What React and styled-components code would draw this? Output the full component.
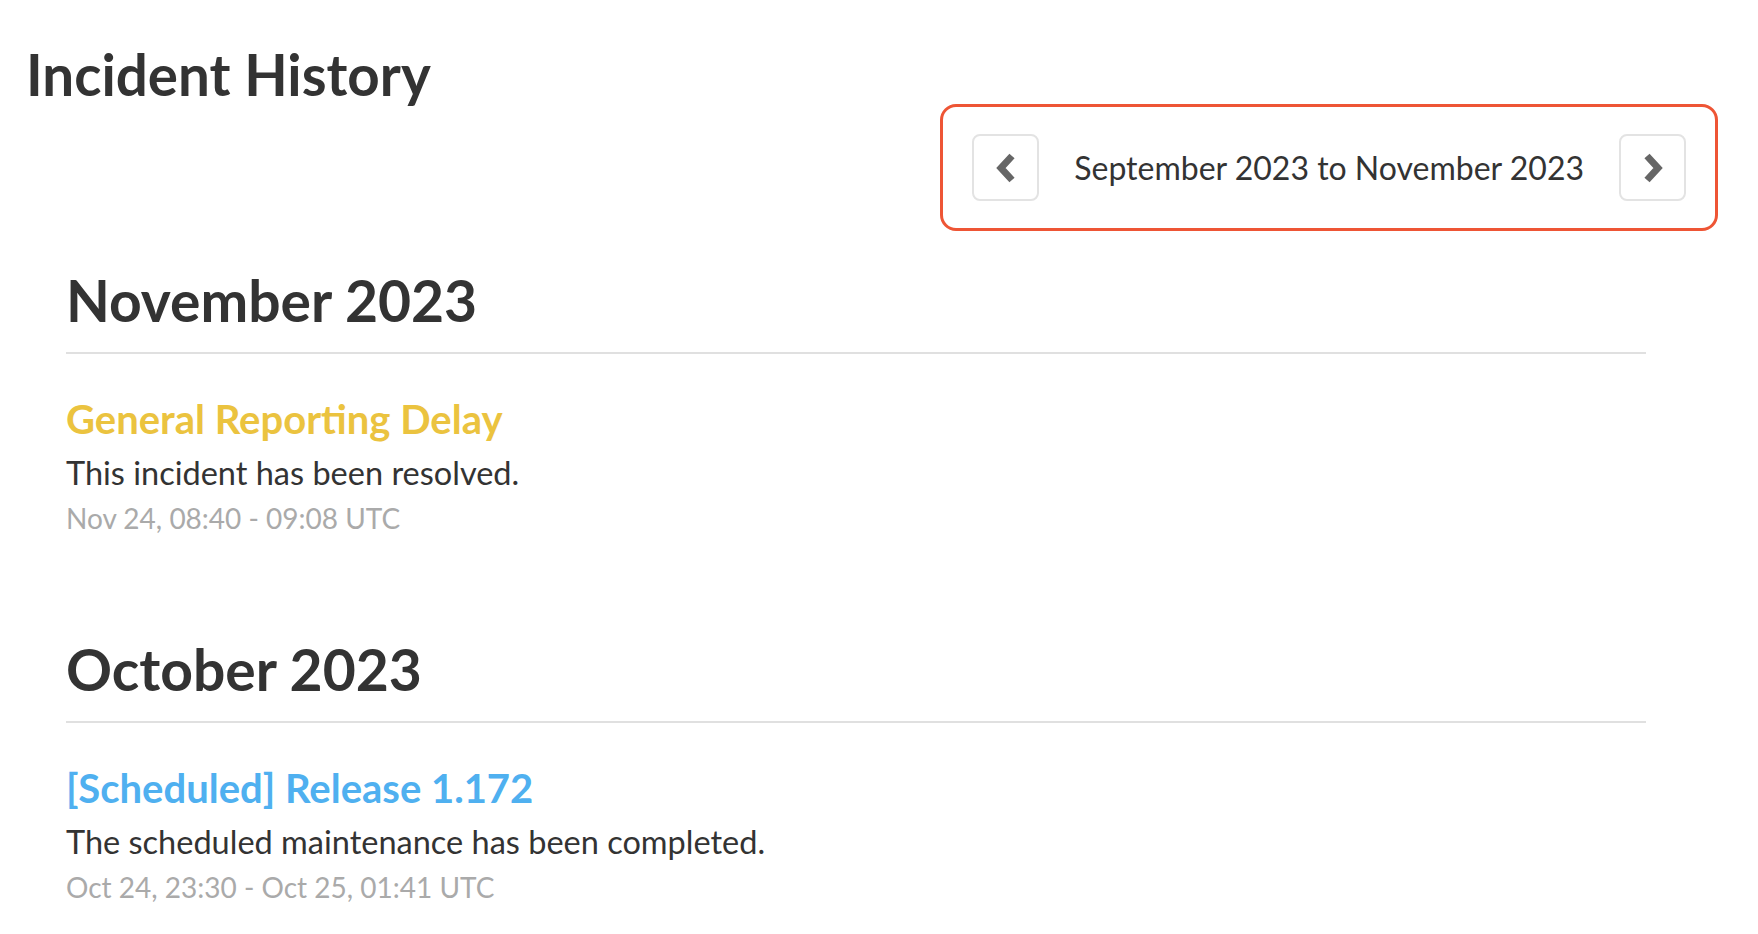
import React from 'react';
import styled, { createGlobalStyle } from 'styled-components';

const GlobalStyle = createGlobalStyle`
  html, body {
    margin: 0;
    padding: 0;
    background: #ffffff;
  }
  body {
    font-family: "Lato", "Liberation Sans", sans-serif;
    color: #333333;
  }
`;

const months = [
  {
    name: 'November 2023',
    incidents: [
      {
        title: 'General Reporting Delay',
        kind: 'minor',
        message: 'This incident has been resolved.',
        time: 'Nov 24, 08:40 - 09:08 UTC',
      },
    ],
  },
  {
    name: 'October 2023',
    incidents: [
      {
        title: '[Scheduled] Release 1.172',
        kind: 'maintenance',
        message: 'The scheduled maintenance has been completed.',
        time: 'Oct 24, 23:30 - Oct 25, 01:41 UTC',
      },
    ],
  },
];

const Chevron = ({ dir }) => (
  <svg width="24" height="34" viewBox="0 0 24 34">
    {dir === 'left' ? (
      <polyline points="18,5 7,17 18,29" fill="none" stroke="#666" strokeWidth="7" />
    ) : (
      <polyline points="6,5 17,17 6,29" fill="none" stroke="#666" strokeWidth="7" />
    )}
  </svg>
);

export default function App() {
  return (
    <Page>
      <GlobalStyle />
      <PageTitle>Incident History</PageTitle>
      <NavRow>
        <RangeBox>
          <NavButton aria-label="previous">
            <Chevron dir="left" />
          </NavButton>
          <RangeLabel>September 2023 to November 2023</RangeLabel>
          <NavButton aria-label="next">
            <Chevron dir="right" />
          </NavButton>
        </RangeBox>
      </NavRow>
      <MonthList>
        {months.map((month) => (
          <Month key={month.name}>
            <MonthTitle>{month.name}</MonthTitle>
            <Divider />
            {month.incidents.map((incident) => (
              <Incident key={incident.title}>
                <IncidentTitle kind={incident.kind}>{incident.title}</IncidentTitle>
                <IncidentMessage>{incident.message}</IncidentMessage>
                <IncidentTime>{incident.time}</IncidentTime>
              </Incident>
            ))}
          </Month>
        ))}
      </MonthList>
    </Page>
  );
}

const Page = styled.div`
  padding: 0 40px 0 26px;
`;

const PageTitle = styled.h1`
  margin: 42px 0 0;
  font-size: 56.5px;
  line-height: 64px;
  font-weight: 700;
  color: #333;
`;

const NavRow = styled.div`
  display: flex;
  justify-content: flex-end;
  margin-top: -2px;
`;

const RangeBox = styled.div`
  display: flex;
  align-items: center;
  gap: 35px;
  padding: 27px 29px;
  border: 3px solid #ee5535;
  border-radius: 16px;
`;

const NavButton = styled.button`
  display: flex;
  align-items: center;
  justify-content: center;
  width: 67px;
  height: 67px;
  padding: 0;
  background: #fff;
  border: 2px solid #e3e3e3;
  border-radius: 8px;
  cursor: pointer;
`;

const RangeLabel = styled.span`
  font-size: 32px;
  color: #333;
`;

const MonthList = styled.div`
  margin: 0 72px 0 40px;
`;

const Month = styled.section`
  margin-top: 37px;
  & + & {
    margin-top: 99px;
  }
`;

const MonthTitle = styled.h2`
  margin: 0 0 20px;
  font-size: 57px;
  line-height: 64px;
  font-weight: 700;
  color: #333;
`;

const Divider = styled.hr`
  margin: 0;
  border: 0;
  border-top: 2px solid #e0e0e0;
`;

const Incident = styled.div`
  margin-top: 43px;
`;

const IncidentTitle = styled.div`
  font-size: 40px;
  line-height: 44px;
  font-weight: 700;
  color: ${(p) => (p.kind === 'maintenance' ? '#4fb0f0' : '#ebc33f')};
`;

const IncidentMessage = styled.div`
  margin-top: 10px;
  font-size: 32.5px;
  line-height: 44px;
  color: #333;
`;

const IncidentTime = styled.div`
  margin-top: 3px;
  font-size: 28px;
  line-height: 40px;
  color: #aaa;
`;
